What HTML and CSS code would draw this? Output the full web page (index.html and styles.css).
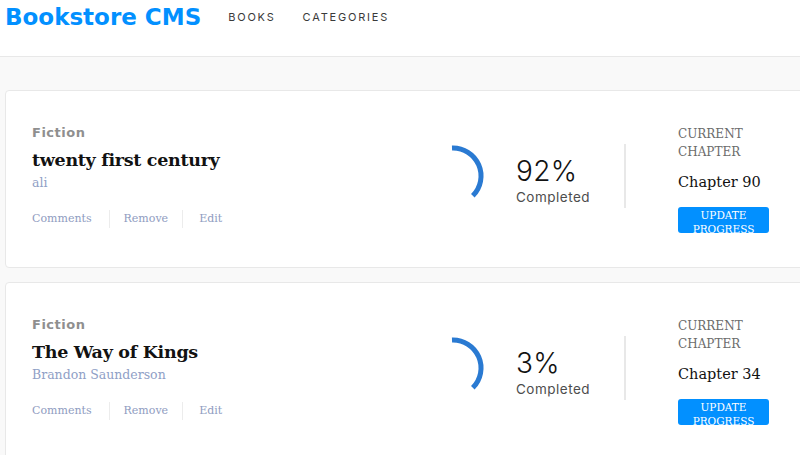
FILE: index.html
```html
<!DOCTYPE html>
<html lang="en">
<head>
<meta charset="utf-8">
<title>Bookstore CMS</title>
<link rel="stylesheet" href="styles.css">
</head>
<body>
<header class="header">
  <a class="logo" href="#">Bookstore CMS</a>
  <nav class="nav">
    <a href="#" class="nav-link">BOOKS</a>
    <a href="#" class="nav-link">CATEGORIES</a>
  </nav>
</header>
<main class="main">
  <section class="card">
    <div class="book-info">
      <p class="genre">Fiction</p>
      <h2 class="title">twenty first century</h2>
      <p class="author">ali</p>
      <ul class="actions">
        <li><button class="action">Comments</button></li>
        <li><button class="action">Remove</button></li>
        <li><button class="action">Edit</button></li>
      </ul>
    </div>
    <div class="progress">
      <svg class="ring" width="70" height="70" viewBox="0 0 70 70" aria-hidden="true">
        <path d="M34 7 A28 28 0 0 1 54.8 54.8" fill="none" stroke="#2a7ad2" stroke-width="5"/>
      </svg>
      <div class="percent">
        <p class="percent-value">92%</p>
        <p class="percent-label">Completed</p>
      </div>
    </div>
    <div class="divider"></div>
    <div class="chapter">
      <p class="chapter-label">CURRENT CHAPTER</p>
      <p class="chapter-value">Chapter 90</p>
      <button class="update-btn">UPDATE PROGRESS</button>
    </div>
  </section>
  <section class="card">
    <div class="book-info">
      <p class="genre">Fiction</p>
      <h2 class="title">The Way of Kings</h2>
      <p class="author">Brandon Saunderson</p>
      <ul class="actions">
        <li><button class="action">Comments</button></li>
        <li><button class="action">Remove</button></li>
        <li><button class="action">Edit</button></li>
      </ul>
    </div>
    <div class="progress">
      <svg class="ring" width="70" height="70" viewBox="0 0 70 70" aria-hidden="true">
        <path d="M34 7 A28 28 0 0 1 54.8 54.8" fill="none" stroke="#2a7ad2" stroke-width="5"/>
      </svg>
      <div class="percent">
        <p class="percent-value">3%</p>
        <p class="percent-label">Completed</p>
      </div>
    </div>
    <div class="divider"></div>
    <div class="chapter">
      <p class="chapter-label">CURRENT CHAPTER</p>
      <p class="chapter-value">Chapter 34</p>
      <button class="update-btn">UPDATE PROGRESS</button>
    </div>
  </section>
</main>
</body>
</html>
```
FILE: styles.css
```css
* { box-sizing: border-box; }

html, body {
  margin: 0;
  padding: 0;
  overflow: hidden;
}

body {
  background: #f9f9f9;
  font-family: "Inter", "DejaVu Sans", sans-serif;
  color: #121212;
  width: 800px;
}

p, h2, ul { margin: 0; padding: 0; }

.header {
  height: 57px;
  background: #fff;
  border-bottom: 1px solid #e8e8e8;
  display: flex;
  align-items: flex-start;
  padding: 3px 0 0 5px;
}

.logo {
  font-family: "DejaVu Sans", sans-serif;
  font-weight: bold;
  font-size: 23px;
  color: #0290ff;
  text-decoration: none;
  line-height: 28px;
}

.nav {
  display: flex;
  gap: 27px;
  margin-left: 27px;
  padding-top: 6px;
}

.nav-link {
  font-family: "Inter", sans-serif;
  font-size: 11px;
  letter-spacing: 1.8px;
  color: #3a3a3a;
  text-decoration: none;
  line-height: 16px;
}

.main {
  padding: 33px 0 0 5px;
  display: flex;
  flex-direction: column;
  gap: 14px;
}

.card {
  background: #fff;
  border: 1px solid #e8e8e8;
  border-radius: 4px;
  height: 178px;
  width: 820px;
  display: flex;
  align-items: center;
  padding-left: 26px;
}

.book-info {
  width: 386px;
  margin-top: -6px;
}

.genre {
  font-family: "DejaVu Sans", sans-serif;
  font-weight: bold;
  font-size: 13px;
  letter-spacing: 0.5px;
  color: #8f8f8f;
  line-height: 16px;
}

.title {
  font-family: "DejaVu Serif", serif;
  font-weight: bold;
  font-size: 17.5px;
  letter-spacing: -0.3px;
  line-height: 24px;
  margin-top: 7px;
}

.author {
  font-family: "DejaVu Serif", serif;
  font-size: 12.5px;
  color: #8fa0c6;
  line-height: 16px;
  margin-top: 3px;
}

.actions {
  list-style: none;
  display: flex;
  margin-top: 19px;
}

.actions li {
  display: flex;
  align-items: center;
}

.actions li + li {
  border-left: 1px solid #ececec;
  height: 18px;
}

.action {
  font-family: "DejaVu Serif", serif;
  font-size: 11px;
  color: #8f9cbf;
  background: none;
  border: 0;
  padding: 0 14px;
  line-height: 16px;
}

.actions li:first-child .action { padding: 0 17px 0 0; }
.actions li:last-child .action { padding-left: 16px; }

.progress {
  display: flex;
  align-items: center;
  width: 206px;
}

.ring {
  display: block;
  margin-top: -6px;
}

.percent {
  margin-left: 28px;
}

.percent-value {
  font-family: "Inter", sans-serif;
  font-weight: 300;
  font-size: 28px;
  letter-spacing: 0.3px;
  line-height: 34px;
  color: #121212;
}

.percent-label {
  font-family: "Inter", sans-serif;
  font-size: 13.5px;
  letter-spacing: 0.5px;
  color: #4d4d4d;
  line-height: 16px;
  margin-top: 1px;
}

.divider {
  width: 2px;
  height: 64px;
  background: #e8e8e8;
  margin-top: -6px;
}

.chapter {
  margin-left: 52px;
  width: 92px;
  margin-top: 0;
}

.chapter-label {
  font-family: "DejaVu Serif", serif;
  font-size: 12px;
  color: #6b6b6b;
  line-height: 18px;
  font-weight: 300;
}

.chapter-value {
  font-family: "DejaVu Serif", serif;
  font-size: 14.5px;
  line-height: 20px;
  margin-top: 11px;
  color: #121212;
}

.update-btn {
  display: block;
  margin-top: 15px;
  width: 91px;
  height: 26px;
  background: #0290ff;
  border: 0;
  border-radius: 3px;
  color: #fff;
  font-family: "DejaVu Serif", serif;
  font-size: 10.5px;
  line-height: 14px;
  padding: 1px 6px 0;
  overflow: visible;
}
```
